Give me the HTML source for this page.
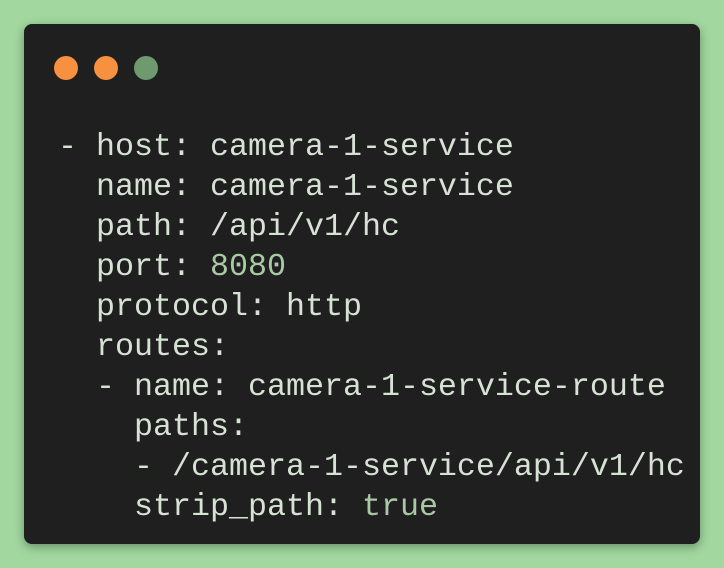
<!DOCTYPE html>
<html><head><meta charset="utf-8"><style>
html,body{margin:0;padding:0}
body{width:724px;height:568px;background:#a2d8a0;position:relative;overflow:hidden}
.win{position:absolute;left:24px;top:24px;width:676px;height:520px;background:#1f1f1f;border-radius:8px;box-shadow:0 3px 10px rgba(0,0,0,.35)}
.dot{position:absolute;top:56px;width:24px;height:24px;border-radius:50%}
pre{position:absolute;left:58px;top:127px;margin:0;font-family:"Liberation Mono",monospace;font-size:31.67px;line-height:40px;color:#d6e2d4}
.n{color:#a9c9a4}
</style></head><body>
<div class="win"></div>
<div class="dot" style="left:54px;background:#f7903f"></div>
<div class="dot" style="left:94px;background:#f7903f"></div>
<div class="dot" style="left:134px;background:#6f9a70"></div>
<pre>- host: camera-1-service
  name: camera-1-service
  path: /api/v1/hc
  port: <span class="n">8080</span>
  protocol: http
  routes:
  - name: camera-1-service-route
    paths:
    - /camera-1-service/api/v1/hc
    strip_path: <span class="n">true</span></pre>
</body></html>
